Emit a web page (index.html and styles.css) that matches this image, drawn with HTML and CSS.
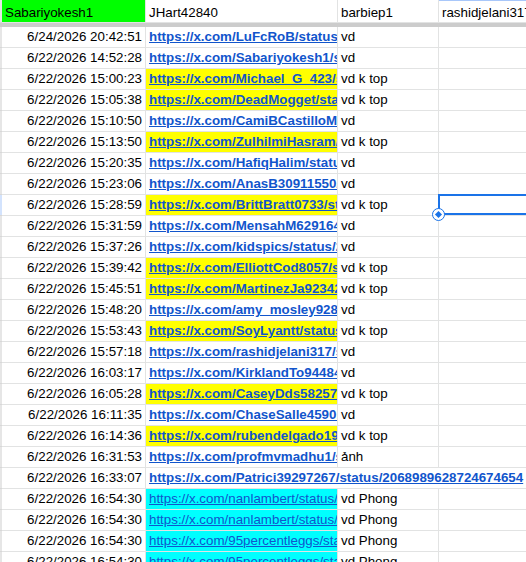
FILE: index.html
```html
<!DOCTYPE html>
<html>
<head>
<meta charset="utf-8">
<link rel="stylesheet" href="styles.css">
</head>
<body>
<div class="sheet">
  <div class="row head">
    <div class="strip"></div>
    <div class="cell green">Sabariyokesh1</div>
    <div class="cell">JHart42840</div>
    <div class="cell">barbiep1</div>
    <div class="cell colsel">rashidjelani317</div>
  </div>
  <div class="freeze"></div>

  <div class="row"><div class="strip"></div><div class="cell date">6/24/2026 20:42:51</div><div class="cell"><a class="lnk b">https://x.com/LuFcRoB/status/2068012345678901234</a></div><div class="cell">vd</div><div class="cell"></div></div>
  <div class="row"><div class="strip"></div><div class="cell date">6/22/2026 14:52:28</div><div class="cell"><a class="lnk b">https://x.com/Sabariyokesh1/status/2068123456789012345</a></div><div class="cell">vd</div><div class="cell"></div></div>
  <div class="row"><div class="strip"></div><div class="cell date">6/22/2026 15:00:23</div><div class="cell yel"><a class="lnk b">https://x.com/Michael_G_423/status/2068234567890123456</a></div><div class="cell">vd k top</div><div class="cell"></div></div>
  <div class="row"><div class="strip"></div><div class="cell date">6/22/2026 15:05:38</div><div class="cell yel"><a class="lnk b">https://x.com/DeadMogget/status/2068345678901234567</a></div><div class="cell">vd k top</div><div class="cell"></div></div>
  <div class="row"><div class="strip"></div><div class="cell date">6/22/2026 15:10:50</div><div class="cell"><a class="lnk b">https://x.com/CamiBCastilloM/status/2068456789012345678</a></div><div class="cell">vd</div><div class="cell"></div></div>
  <div class="row"><div class="strip"></div><div class="cell date">6/22/2026 15:13:50</div><div class="cell yel"><a class="lnk b">https://x.com/ZulhilmiHasram/status/2068567890123456789</a></div><div class="cell">vd k top</div><div class="cell"></div></div>
  <div class="row"><div class="strip"></div><div class="cell date">6/22/2026 15:20:35</div><div class="cell"><a class="lnk b">https://x.com/HafiqHalim/status/2068678901234567890</a></div><div class="cell">vd</div><div class="cell"></div></div>
  <div class="row"><div class="strip"></div><div class="cell date">6/22/2026 15:23:06</div><div class="cell"><a class="lnk b">https://x.com/AnasB30911550/status/2068789012345678901</a></div><div class="cell">vd</div><div class="cell"></div></div>
  <div class="row"><div class="strip sel"></div><div class="cell date">6/22/2026 15:28:59</div><div class="cell yel"><a class="lnk b">https://x.com/BrittBratt0733/status/2068890123456789012</a></div><div class="cell">vd k top</div><div class="cell"></div></div>
  <div class="row"><div class="strip"></div><div class="cell date">6/22/2026 15:31:59</div><div class="cell"><a class="lnk b">https://x.com/MensahM62916424/status/2068901234567890123</a></div><div class="cell">vd</div><div class="cell"></div></div>
  <div class="row"><div class="strip"></div><div class="cell date">6/22/2026 15:37:26</div><div class="cell"><a class="lnk b">https://x.com/kidspics/status/2069012345678901234</a></div><div class="cell">vd</div><div class="cell"></div></div>
  <div class="row"><div class="strip"></div><div class="cell date">6/22/2026 15:39:42</div><div class="cell yel"><a class="lnk b">https://x.com/ElliottCod8057/status/2069123456789012345</a></div><div class="cell">vd k top</div><div class="cell"></div></div>
  <div class="row"><div class="strip"></div><div class="cell date">6/22/2026 15:45:51</div><div class="cell yel"><a class="lnk b">https://x.com/MartinezJa92342/status/2069234567890123456</a></div><div class="cell">vd k top</div><div class="cell"></div></div>
  <div class="row"><div class="strip"></div><div class="cell date">6/22/2026 15:48:20</div><div class="cell"><a class="lnk b">https://x.com/amy_mosley928/status/2069345678901234567</a></div><div class="cell">vd</div><div class="cell"></div></div>
  <div class="row"><div class="strip"></div><div class="cell date">6/22/2026 15:53:43</div><div class="cell yel"><a class="lnk b">https://x.com/SoyLyantt/status/2069456789012345678</a></div><div class="cell">vd k top</div><div class="cell"></div></div>
  <div class="row"><div class="strip"></div><div class="cell date">6/22/2026 15:57:18</div><div class="cell"><a class="lnk b">https://x.com/rashidjelani317/status/2069567890123456789</a></div><div class="cell">vd</div><div class="cell"></div></div>
  <div class="row"><div class="strip"></div><div class="cell date">6/22/2026 16:03:17</div><div class="cell"><a class="lnk b">https://x.com/KirklandTo94484/status/2069678901234567890</a></div><div class="cell">vd</div><div class="cell"></div></div>
  <div class="row"><div class="strip"></div><div class="cell date">6/22/2026 16:05:28</div><div class="cell yel"><a class="lnk b">https://x.com/CaseyDds58257/status/2069789012345678901</a></div><div class="cell">vd k top</div><div class="cell"></div></div>
  <div class="row"><div class="strip"></div><div class="cell date">6/22/2026 16:11:35</div><div class="cell"><a class="lnk b">https://x.com/ChaseSalle45901/status/2069890123456789012</a></div><div class="cell">vd</div><div class="cell"></div></div>
  <div class="row"><div class="strip"></div><div class="cell date">6/22/2026 16:14:36</div><div class="cell yel"><a class="lnk b">https://x.com/rubendelgado1984/status/2069901234567890123</a></div><div class="cell">vd k top</div><div class="cell"></div></div>
  <div class="row"><div class="strip"></div><div class="cell date">6/22/2026 16:31:53</div><div class="cell"><a class="lnk b">https://x.com/profmvmadhu1/status/2068901234567890123</a></div><div class="cell">ảnh</div><div class="cell"></div></div>
  <div class="row"><div class="strip"></div><div class="cell date">6/22/2026 16:33:07</div><div class="cell span3"><a class="lnk b">https://x.com/Patrici39297267/status/2068989628724674654</a></div></div>
  <div class="row"><div class="strip"></div><div class="cell date">6/22/2026 16:54:30</div><div class="cell cyan"><a class="lnk">https://x.com/nanlambert/status/2068999123456789012</a></div><div class="cell">vd Phong</div><div class="cell"></div></div>
  <div class="row"><div class="strip"></div><div class="cell date">6/22/2026 16:54:30</div><div class="cell cyan"><a class="lnk">https://x.com/nanlambert/status/2068999234567890123</a></div><div class="cell">vd Phong</div><div class="cell"></div></div>
  <div class="row"><div class="strip"></div><div class="cell date">6/22/2026 16:54:30</div><div class="cell cyan"><a class="lnk">https://x.com/95percentleggs/status/2068999345678901234</a></div><div class="cell">vd Phong</div><div class="cell"></div></div>
  <div class="row"><div class="strip"></div><div class="cell date">6/22/2026 16:54:30</div><div class="cell cyan"><a class="lnk">https://x.com/95percentleggs/status/2068999456789012345</a></div><div class="cell">vd Phong</div><div class="cell"></div></div>

  <div class="selbox"></div>
  <div class="handle"><span class="dot"></span></div>
</div>
</body>
</html>
```

FILE: styles.css
```css
html, body {
  margin: 0;
  padding: 0;
  background: #ffffff;
  overflow: hidden;
}
.sheet {
  position: relative;
  width: 526px;
  height: 562px;
  overflow: hidden;
  font-family: "Liberation Sans", Arial, sans-serif;
  font-size: 13.333px;
  color: #000000;
}
.row {
  display: grid;
  grid-template-columns: 2px 144px 192px 101px 200px;
  height: 21px;
}
.row .cell {
  box-sizing: border-box;
  border-right: 1px solid #e2e3e3;
  border-bottom: 1px solid #e2e3e3;
  padding: 0 3px;
  line-height: 20px;
  white-space: nowrap;
  overflow: hidden;
}
.strip {
  background: #e6e6e6;
  border-bottom: 1px solid #d8d8d8;
}
.strip.sel {
  background: #d3e3fd;
}
.head {
  height: 23px;
}
.head .cell {
  padding-top: 5px;
  line-height: 15px;
}
.head .strip {
  background: #e6e6e6;
}
.green {
  background: #00ff00;
  padding-left: 4px;
}
.colsel {
  box-shadow: inset 0 1px 0 #a8c7fa;
}
.freeze {
  height: 4px;
  background: #cccccc;
}
.date {
  text-align: right;
}
.yel {
  background: #ffff00;
}
.cyan {
  background: #00ffff;
}
.span3 {
  grid-column: span 3;
  border-right: none !important;
}
.lnk {
  color: #1155cc;
  text-decoration: underline;
}
.lnk.b {
  font-weight: bold;
}
.selbox {
  position: absolute;
  left: 438px;
  top: 194px;
  width: 120px;
  height: 21px;
  box-sizing: border-box;
  border: 2px solid #1a73e8;
}
.handle {
  position: absolute;
  left: 432px;
  top: 208px;
  width: 13px;
  height: 13px;
  box-sizing: border-box;
  border-radius: 50%;
  background: #ffffff;
  border: 1.5px solid #1a73e8;
  display: flex;
  align-items: center;
  justify-content: center;
}
.dot {
  width: 5px;
  height: 5px;
  background: #1a73e8;
  transform: rotate(45deg);
}
```
